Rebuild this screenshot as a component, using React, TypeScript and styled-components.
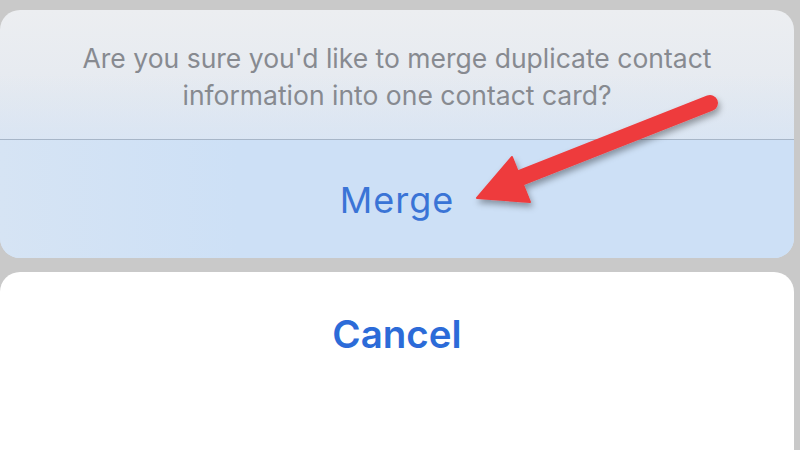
import React from "react";
import styled, { createGlobalStyle } from "styled-components";

const Global = createGlobalStyle`
  html, body { margin: 0; padding: 0; background: #c9c9c9; overflow: hidden; }
  body { width: 800px; height: 450px; font-family: Inter, "Liberation Sans", Arial, sans-serif; }
`;

const Page = styled.div`
  position: relative;
  width: 800px;
  height: 450px;
  overflow: hidden;
  display: flex;
  flex-direction: column;
  gap: 14px;
  padding: 10px 6px 0 0;
  box-sizing: border-box;
  background: #c9c9c9;
`;

const ActionGroup = styled.div`
  height: 248px;
  border-radius: 20px;
  overflow: hidden;
  display: flex;
  flex-direction: column;
  background: linear-gradient(180deg, #eceef1 0%, #e4e9f0 40%, #d3e2f4 100%);
`;

const Message = styled.div`
  height: 129px;
  display: flex;
  align-items: center;
  justify-content: center;
  text-align: center;
  color: #878a90;
  font-size: 26.5px;
  line-height: 37px;
  padding: 4px 40px 0;
  box-sizing: border-box;
  background: linear-gradient(180deg, rgba(236,238,241,0) 50%, rgba(214,228,245,0.6) 100%);
`;

const Separator = styled.div`
  height: 1px;
  background: #a7b6c8;
`;

const ActionButton = styled.div<{ $bold?: boolean }>`
  flex: 1;
  display: flex;
  align-items: center;
  justify-content: center;
  color: ${(p) => (p.$bold ? "#2c6bd8" : "#3a74d6")};
  font-size: ${(p) => (p.$bold ? "38.5px" : "36px")};
  font-weight: ${(p) => (p.$bold ? 600 : 400)};
  letter-spacing: ${(p) => (p.$bold ? "0" : "1px")};
`;

const MergeButton = styled(ActionButton)`
  padding-top: 2px;
  background: linear-gradient(90deg, #d6e4f4 0%, #cde0f6 30%, #cde0f6 100%);
`;

const CancelCard = styled.div`
  flex: 1;
  border-radius: 20px 20px 0 0;
  background: #ffffff;
  display: flex;
  flex-direction: column;
`;

const CancelButton = styled(ActionButton)`
  flex: none;
  height: 124px;
`;

const ArrowOverlay = styled.svg`
  position: absolute;
  left: 0;
  top: 0;
  pointer-events: none;
`;

export default function App() {
  return (
    <>
      <Global />
      <Page>
        <ActionGroup>
          <Message>
            Are you sure you'd like to merge duplicate contact information into one contact card?
          </Message>
          <Separator />
          <MergeButton>Merge</MergeButton>
        </ActionGroup>
        <CancelCard>
          <CancelButton $bold>Cancel</CancelButton>
        </CancelCard>
        <ArrowOverlay width="800" height="450" viewBox="0 0 800 450">
          <defs>
            <filter id="sh" x="-20%" y="-20%" width="140%" height="140%">
              <feDropShadow dx="2" dy="4" stdDeviation="3" floodColor="#000" floodOpacity="0.35" />
            </filter>
          </defs>
          <g filter="url(#sh)" fill="#ee3b3d" stroke="#ee3b3d">
            <line x1="710" y1="103" x2="515" y2="180" strokeWidth="16" strokeLinecap="round" />
            <polygon points="477,198 512,157 530,202" strokeWidth="2" strokeLinejoin="round" />
          </g>
        </ArrowOverlay>
      </Page>
    </>
  );
}
